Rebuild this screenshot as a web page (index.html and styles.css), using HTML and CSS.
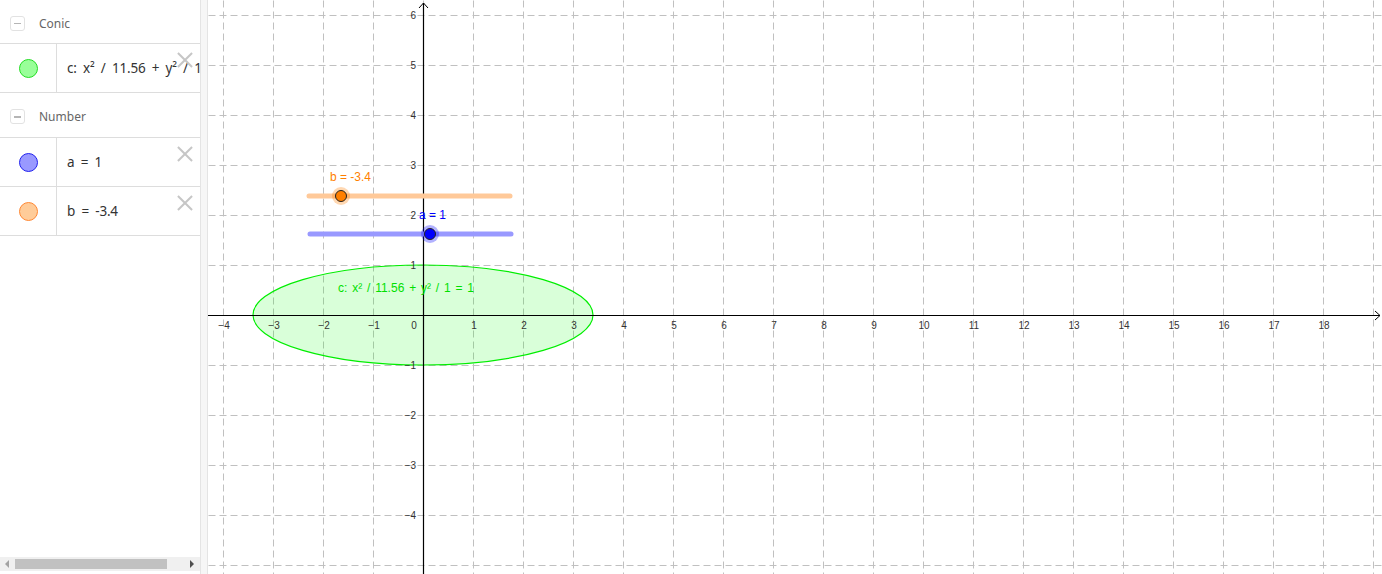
FILE: index.html
```html
<!DOCTYPE html>
<html>
<head>
<meta charset="utf-8">
<link rel="stylesheet" href="styles.css">
</head>
<body>
<div class="app">
  <aside class="algebra">
    <div class="list">
      <div class="group">
        <span class="toggle"></span>
        <span class="group-name">Conic</span>
      </div>
      <div class="item">
        <div class="marker"><span class="dot dot-green"></span></div>
        <div class="formula">c: x² / 11.56 + y² / 1 = 1</div>
        <span class="close"></span>
      </div>
      <div class="group">
        <span class="toggle"></span>
        <span class="group-name">Number</span>
      </div>
      <div class="item">
        <div class="marker"><span class="dot dot-blue"></span></div>
        <div class="formula">a = 1</div>
        <span class="close"></span>
      </div>
      <div class="item">
        <div class="marker"><span class="dot dot-orange"></span></div>
        <div class="formula">b = -3.4</div>
        <span class="close"></span>
      </div>
    </div>
    <div class="hscroll">
      <span class="arrow arrow-left"></span>
      <span class="thumb"></span>
      <span class="arrow arrow-right"></span>
    </div>
  </aside>
  <div class="splitter"></div>
  <main class="graphics">
    <svg class="canvas" width="1174" height="574" viewBox="0 0 1174 574" xmlns="http://www.w3.org/2000/svg">
      <path class="grid" d="M15 0V574M65 0V574M115 0V574M165 0V574M215 0V574M265 0V574M315 0V574M365 0V574M415 0V574M465 0V574M515 0V574M565 0V574M615 0V574M665 0V574M715 0V574M765 0V574M815 0V574M865 0V574M915 0V574M965 0V574M1015 0V574M1065 0V574M1115 0V574M1165 0V574"/>
      <path class="grid" d="M0 15H1174M0 65H1174M0 115H1174M0 165H1174M0 215H1174M0 265H1174M0 365H1174M0 415H1174M0 465H1174M0 515H1174M0 565H1174"/>
      <ellipse class="conic" cx="215" cy="315" rx="170" ry="50"/>
      <path class="axis" d="M0 315.5H1172M215.5 574V3"/>
      <path class="axis-arrow" d="M1167 311L1172 315.5L1167 320M211 8L215.5 3L220 8"/>
      <g class="xlabels">
        <text x="16" y="329">−4</text>
        <text x="66" y="329">−3</text>
        <text x="116" y="329">−2</text>
        <text x="166" y="329">−1</text>
        <text x="206" y="329">0</text>
        <text x="266" y="329">1</text>
        <text x="316" y="329">2</text>
        <text x="366" y="329">3</text>
        <text x="416" y="329">4</text>
        <text x="466" y="329">5</text>
        <text x="516" y="329">6</text>
        <text x="566" y="329">7</text>
        <text x="616" y="329">8</text>
        <text x="666" y="329">9</text>
        <text x="716" y="329">10</text>
        <text x="766" y="329">11</text>
        <text x="816" y="329">12</text>
        <text x="866" y="329">13</text>
        <text x="916" y="329">14</text>
        <text x="966" y="329">15</text>
        <text x="1016" y="329">16</text>
        <text x="1066" y="329">17</text>
        <text x="1116" y="329">18</text>
      </g>
      <g class="ylabels">
        <text x="208" y="19">6</text>
        <text x="208" y="69">5</text>
        <text x="208" y="119">4</text>
        <text x="208" y="169">3</text>
        <text x="208" y="219">2</text>
        <text x="208" y="269">1</text>
        <text x="208" y="369">−1</text>
        <text x="208" y="419">−2</text>
        <text x="208" y="469">−3</text>
        <text x="208" y="519">−4</text>
      </g>
      <text class="label label-c" x="130" y="292">c: x² / 11.56 + y² / 1 = 1</text>
      <line class="slider slider-b" x1="101" y1="196" x2="302" y2="196"/>
      <circle class="halo halo-b" cx="133" cy="196" r="9"/>
      <circle class="point point-b" cx="133" cy="196" r="5.5"/>
      <text class="label label-b" x="122" y="181">b = -3.4</text>
      <line class="slider slider-a" x1="102" y1="234" x2="303" y2="234"/>
      <circle class="halo halo-a" cx="222" cy="234" r="9"/>
      <circle class="point point-a" cx="222" cy="234" r="5.5"/>
      <text class="label label-a" x="211" y="219">a = 1</text>
    </svg>
  </main>
</div>
</body>
</html>
```
FILE: styles.css
```css
html, body {
  margin: 0;
  padding: 0;
  background: #ffffff;
}

.app {
  display: flex;
  width: 1382px;
  height: 574px;
  overflow: hidden;
}

.algebra {
  width: 200px;
  flex: none;
  display: flex;
  flex-direction: column;
  background: #ffffff;
  font-family: "Noto Sans", "DejaVu Sans", sans-serif;
}

.list {
  flex: 1;
}

.group {
  height: 44px;
  display: flex;
  align-items: center;
  padding-top: 3px;
  border-bottom: 1px solid #dddddd;
  box-sizing: border-box;
}

.item + .group {
  height: 45px;
}

.toggle {
  position: relative;
  width: 15px;
  height: 15px;
  margin-left: 10px;
  border: 1px solid #e2e2e2;
  border-radius: 3px;
  box-sizing: border-box;
}

.toggle::after {
  content: "";
  position: absolute;
  left: 3px;
  top: 6px;
  width: 7px;
  height: 1.5px;
  background: #b5b5b5;
}

.group-name {
  margin-left: 14px;
  font-size: 12px;
  color: #666666;
}

.item {
  position: relative;
  height: 49px;
  display: flex;
  border-bottom: 1px solid #dddddd;
  box-sizing: border-box;
  overflow: hidden;
}

.marker {
  width: 56px;
  flex: none;
  display: flex;
  align-items: center;
  justify-content: center;
  border-right: 1px solid #dddddd;
}

.dot {
  width: 19px;
  height: 19px;
  border-radius: 50%;
  box-sizing: border-box;
}

.dot-green {
  background: #99ff99;
  border: 1px solid #22dd22;
}

.dot-blue {
  background: #9999ff;
  border: 1px solid #2222ee;
}

.dot-orange {
  background: #ffcc99;
  border: 1px solid #ff8833;
}

.formula {
  display: flex;
  align-items: center;
  padding-left: 10px;
  white-space: nowrap;
  font-size: 13.5px;
  letter-spacing: -0.2px;
  word-spacing: 3px;
  color: #333333;
}

.close {
  position: absolute;
  right: 7px;
  top: 8px;
  width: 16px;
  height: 16px;
}

.close::before,
.close::after {
  content: "";
  position: absolute;
  left: -2px;
  top: 7px;
  width: 20px;
  height: 2px;
  background: #c6c6c6;
  transform: rotate(45deg);
}

.close::after {
  transform: rotate(-45deg);
}

.hscroll {
  position: relative;
  height: 14px;
  margin-bottom: 3px;
  background: #f0f0f0;
}

.thumb {
  position: absolute;
  left: 15px;
  top: 2px;
  width: 152px;
  height: 10px;
  background: #c1c1c1;
}

.arrow {
  position: absolute;
  top: 3px;
  width: 0;
  height: 0;
  border-top: 4px solid transparent;
  border-bottom: 4px solid transparent;
}

.arrow-left {
  left: 5px;
  border-right: 4px solid #a3a3a3;
}

.arrow-right {
  right: 6px;
  border-left: 4px solid #505050;
}

.splitter {
  width: 8px;
  flex: none;
  background: #f6f6f6;
  border-left: 1px solid #e4e4e4;
  border-right: 1px solid #e4e4e4;
  box-sizing: border-box;
}

.graphics {
  flex: 1;
  position: relative;
  overflow: hidden;
}

.canvas {
  display: block;
  font-family: "Liberation Sans", Arial, sans-serif;
}

.grid {
  fill: none;
  stroke: #c0c0c0;
  stroke-width: 1;
  stroke-dasharray: 7 4;
  transform: translate(0.5px, 0.5px);
}

.axis {
  fill: none;
  stroke: #000000;
  stroke-width: 1.2;
}

.axis-arrow {
  fill: none;
  stroke: #000000;
  stroke-width: 1;
}

.xlabels text {
  font-size: 10px;
  fill: #333333;
  text-anchor: middle;
}

.ylabels text {
  font-size: 10px;
  fill: #333333;
  text-anchor: end;
}

.conic {
  fill: #00ff00;
  fill-opacity: 0.15;
  stroke: #00ee00;
  stroke-width: 1.2;
}

.label {
  font-size: 12px;
}

.label-c {
  fill: #00e000;
  word-spacing: 1.5px;
}

.label-b {
  fill: #ff7f00;
}

.label-a {
  fill: #0000ff;
}

.slider {
  stroke-width: 5;
  stroke-linecap: round;
}

.slider-b {
  stroke: #ffc999;
}

.slider-a {
  stroke: #9999ff;
}

.halo-b {
  fill: #ff7f00;
  fill-opacity: 0.3;
}

.halo-a {
  fill: #0000ff;
  fill-opacity: 0.3;
}

.point {
  stroke: #222222;
  stroke-width: 1;
}

.point-b {
  fill: #ff7f00;
}

.point-a {
  fill: #0000ff;
}
```
